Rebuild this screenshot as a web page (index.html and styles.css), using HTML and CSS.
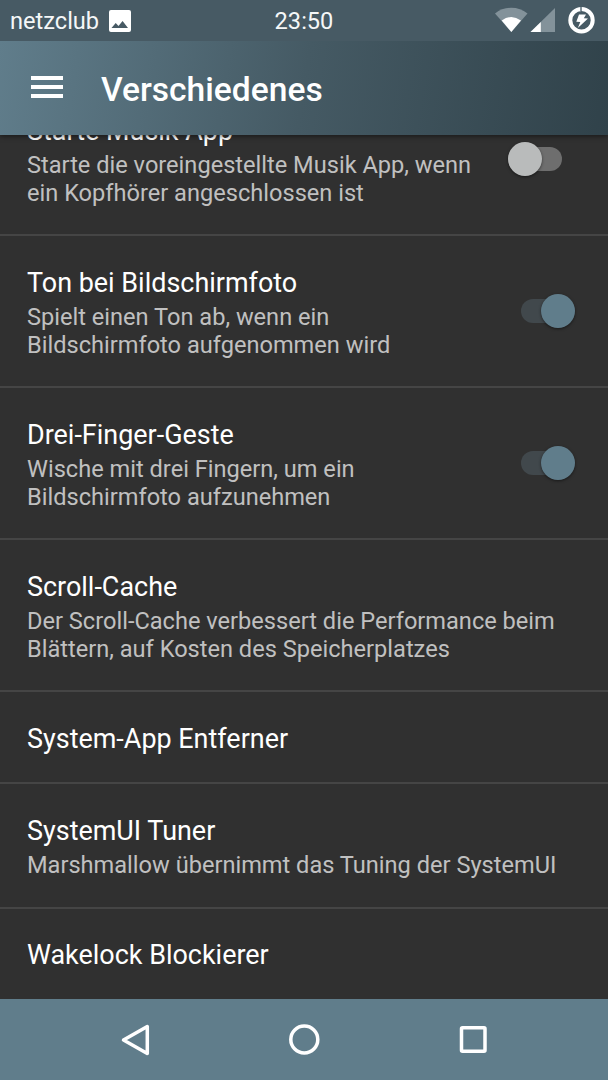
FILE: index.html
```
<!DOCTYPE html>
<html lang="de">
<head>
<meta charset="utf-8">
<title>Verschiedenes</title>
<link rel="stylesheet" href="styles.css">
</head>
<body>
<div class="screen">
  <header class="status">
    <div class="status-left">
      <span class="carrier">netzclub</span>
      <svg class="picture" viewBox="0 0 22 22"><path fill="#fff" fill-rule="evenodd" d="M2 0H20Q22 0 22 2V20Q22 22 20 22H2Q0 22 0 20V2Q0 0 2 0ZM2.500 18H19L13.600 11L9.500 16L6.700 13Z"/></svg>
    </div>
    <span class="clock">23:50</span>
    <svg class="signals" viewBox="0 0 104 40">
      <path fill="#83929a" d="M-2 13.500A26 26 0 0 1 30.500 13.500L14.300 32Z"/>
      <path fill="#fff" d="M4.700 20.500Q14.300 13.500 24 20.500L14.300 32Z"/>
      <path fill="#83929a" d="M58 8V32H33.500Z"/>
      <path fill="#fff" d="M43.800 21.900V32H33.500Z"/>
      <circle cx="84.500" cy="20.200" r="11.200" fill="none" stroke="#fff" stroke-width="4"/>
      <path stroke="#83929a" stroke-width="2" d="M84 7V11"/>
      <path fill="#fff" d="M82 14.500H89L86.800 18.200L91 18.500L80.800 28L83.300 22L79.300 21.700Z"/>
    </svg>
  </header>
  <div class="toolbar">
    <svg class="menu" viewBox="0 0 32 22"><path fill="#fff" d="M0 0H32V4H0ZM0 9H32V13H0ZM0 18H32V22H0Z"/></svg>
    <h1>Verschiedenes</h1>
  </div>
  <main class="list">
    <section class="row first">
      <div class="copy"><h2>Starte Musik App</h2><p>Starte die voreingestellte Musik App, wenn<br>ein Kopfhörer angeschlossen ist</p></div>
      <span class="switch off"></span>
    </section>
    <section class="row">
      <div class="copy"><h2>Ton bei Bildschirmfoto</h2><p>Spielt einen Ton ab, wenn ein<br>Bildschirmfoto aufgenommen wird</p></div>
      <span class="switch on"></span>
    </section>
    <section class="row">
      <div class="copy"><h2>Drei-Finger-Geste</h2><p>Wische mit drei Fingern, um ein<br>Bildschirmfoto aufzunehmen</p></div>
      <span class="switch on"></span>
    </section>
    <section class="row">
      <div class="copy"><h2>Scroll-Cache</h2><p>Der Scroll-Cache verbessert die Performance beim<br>Blättern, auf Kosten des Speicherplatzes</p></div>
    </section>
    <section class="row single"><div class="copy"><h2>System-App Entferner</h2></div></section>
    <section class="row short"><div class="copy"><h2>SystemUI Tuner</h2><p>Marshmallow übernimmt das Tuning der SystemUI</p></div></section>
    <section class="row single last"><div class="copy"><h2>Wakelock Blockierer</h2></div></section>
  </main>
  <nav class="navbar">
    <svg viewBox="0 0 32 36"><path d="M28.300 4.500V31.500L4.500 18Z"/></svg>
    <svg viewBox="0 0 32 36"><circle cx="16.300" cy="17.500" r="13.500"/></svg>
    <svg viewBox="0 0 32 36"><rect x="4.500" y="5.800" width="23.500" height="23.500" rx="1"/></svg>
  </nav>
</div>
</body>
</html>
```

FILE: styles.css
```
* { box-sizing: border-box; }
body { margin: 0; background: #303030; color: #fff; font-family: Roboto, "Noto Sans", sans-serif; }
h1, h2, p { margin: 0; font-weight: 400; white-space: nowrap; }
svg { display: block; flex: none; }
.screen { width: 608px; height: 1080px; overflow: hidden; display: flex; flex-direction: column; }

.status { position: relative; z-index: 2; flex: none; height: 41px; display: grid; grid-template-columns: 254px 100px 254px; align-items: center; background: #475a64; font-size: 23.6px; line-height: 40px; color: #f5f7f8; }
.status-left { display: flex; align-items: center; gap: 10px; padding-left: 10px; }
.picture { width: 22px; height: 22px; }
.clock { text-align: center; }
.signals { width: 104px; height: 40px; justify-self: end; margin-right: 7px; overflow: visible; align-self: start; }

.toolbar { position: relative; z-index: 1; flex: none; height: 94px; display: flex; align-items: center; padding: 2px 0 0 31px; background: linear-gradient(99deg, #607d8b 0%, #455a64 50%, #30424a 100%); box-shadow: 0 1px 5px rgba(0, 0, 0, .55); }
.menu { width: 32px; height: 22px; margin-bottom: 4px; }
.toolbar h1 { margin: 1px 0 0 38px; font-size: 33.6px; line-height: 40px; font-weight: 500; }

.list { flex: none; height: 864px; overflow: hidden; background: #303030; }
.row { height: 152px; display: flex; justify-content: space-between; border-bottom: 2px solid #454545; padding: 31px 33px 0 27px; }
.first { margin-top: -51px; }
.single { height: 92px; }
.short { height: 125px; }
.last { border-bottom: 0; padding-top: 30px; }
.row h2 { font-size: 26.95px; line-height: 32px; }
.row p { margin-top: 5px; font-size: 23.6px; line-height: 27.7px; color: #c0c0c0; }
.switch { position: relative; flex: none; width: 54px; height: 24px; margin-top: 32px; border-radius: 12px; }
.switch::after { content: ""; position: absolute; top: -5px; width: 34px; height: 34px; border-radius: 50%; box-shadow: 0 1px 3px rgba(0, 0, 0, .5); }
.off { background: #6e6e6e; margin-right: 13px; }
.off::after { left: 0; background: #b9bbbb; }
.on { background: #41484c; }
.on::after { right: 0; background: #607d8b; }

.navbar { flex: none; height: 81px; display: flex; align-items: center; justify-content: center; gap: 137px; background: #607d8b; }
.navbar svg { width: 32px; height: 36px; fill: none; stroke: #fff; stroke-width: 3.500; stroke-linejoin: round; }
```
